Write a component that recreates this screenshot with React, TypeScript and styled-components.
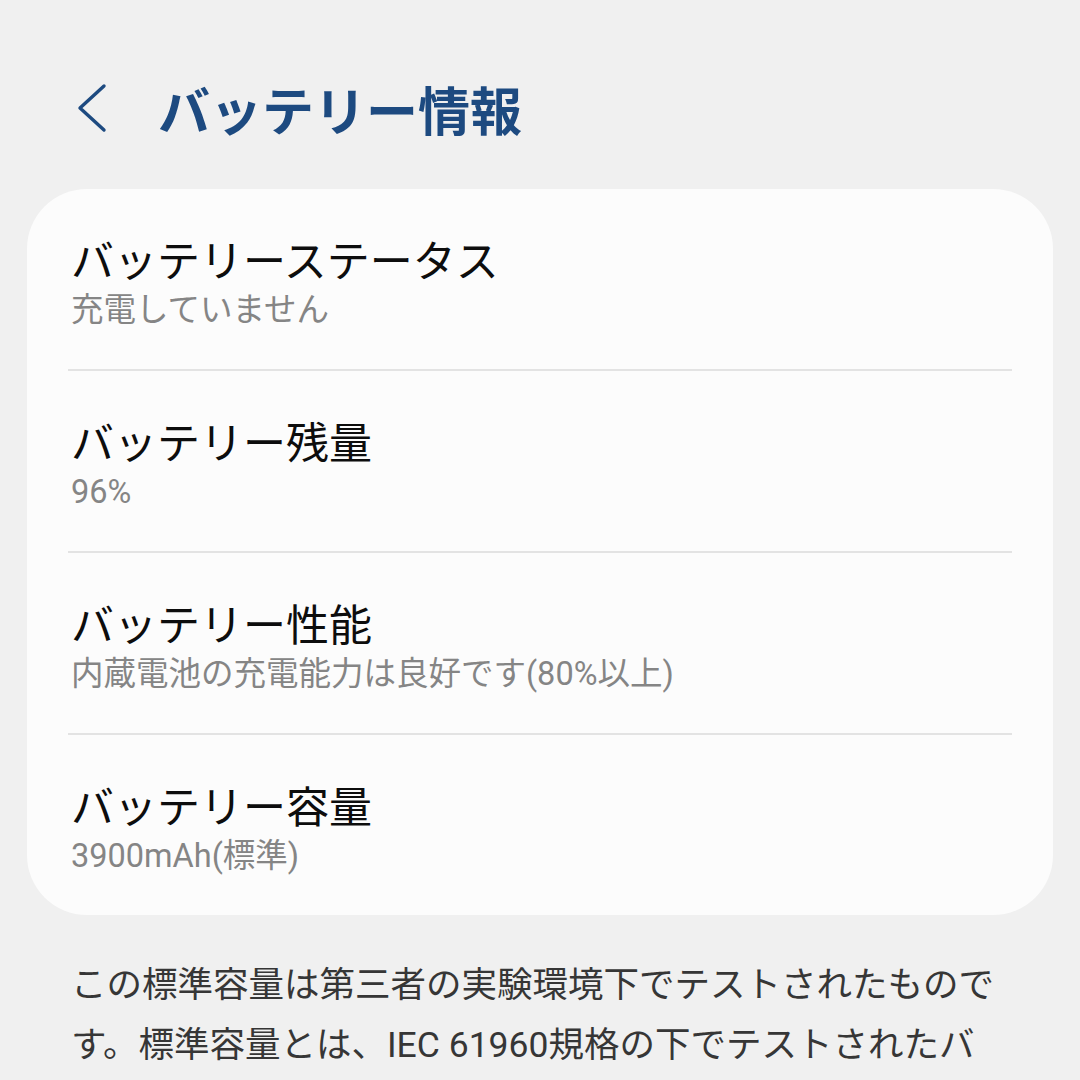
import styled, { createGlobalStyle } from "styled-components";

interface Item {
  title: string;
  value: string;
}

const items: Item[] = [
  { title: "バッテリーステータス", value: "充電していません" },
  { title: "バッテリー残量", value: "96%" },
  { title: "バッテリー性能", value: "内蔵電池の充電能力は良好です(80%以上)" },
  { title: "バッテリー容量", value: "3900mAh(標準)" },
];

export default function App() {
  return (
    <>
      <GlobalStyle />
      <Page>
        <Header>
          <BackButton aria-label="戻る">
            <svg width="32" height="50" viewBox="0 0 32 50">
              <polyline
                points="28,3 4,25 28,47"
                fill="none"
                stroke="#1d4a80"
                strokeWidth="3.4"
                strokeLinecap="round"
                strokeLinejoin="round"
              />
            </svg>
          </BackButton>
          <Title>バッテリー情報</Title>
        </Header>
        <Card>
          {items.map((item, i) => (
            <Row key={item.title} $last={i === items.length - 1}>
              <RowTitle>{item.title}</RowTitle>
              <RowValue>{item.value}</RowValue>
            </Row>
          ))}
        </Card>
        <Note>
          この標準容量は第三者の実験環境下でテストされたもので
          <br />
          す。標準容量とは、IEC 61960規格の下でテストされたバ
        </Note>
      </Page>
    </>
  );
}

const GlobalStyle = createGlobalStyle`
  html, body {
    margin: 0;
    padding: 0;
    background: #f0f0f0;
  }
  body {
    font-family: Roboto, "Noto Sans CJK JP", sans-serif;
  }
`;

const Page = styled.div`
  width: 1080px;
  height: 1080px;
  overflow: hidden;
  padding: 48px 27px 0;
  box-sizing: border-box;
`;

const Header = styled.header`
  height: 120px;
  display: flex;
  align-items: center;
  padding-left: 49px;
  gap: 50px;
  margin-bottom: 21px;
`;

const BackButton = styled.button`
  border: none;
  background: none;
  padding: 0;
  display: flex;
  cursor: pointer;
`;

const Title = styled.h1`
  margin: 0;
  font-size: 52px;
  font-weight: 700;
  color: #1d4a80;
  font-family: "Noto Sans CJK JP", sans-serif;
`;

const Card = styled.section`
  background: #fcfcfc;
  border-radius: 60px;
  display: flex;
  flex-direction: column;
`;

const Row = styled.div<{ $last: boolean }>`
  position: relative;
  padding: 41px 44px 37px;
  display: flex;
  flex-direction: column;
  border-bottom: ${(p) => (p.$last ? "none" : "2px solid transparent")};
  &::after {
    content: "";
    display: ${(p) => (p.$last ? "none" : "block")};
    position: absolute;
    left: 41px;
    right: 41px;
    bottom: -2px;
    height: 2px;
    background: #e3e3e3;
  }
`;

const RowTitle = styled.div`
  font-size: 43px;
  line-height: 56px;
  color: #0d0d0d;
  font-family: "Noto Sans CJK JP", sans-serif;
`;

const RowValue = styled.div`
  margin-top: 2px;
  font-size: 32.5px;
  line-height: 44px;
  color: #858585;
`;

const Note = styled.p`
  margin: 0;
  padding: 40px 0 0 44px;
  font-size: 35.5px;
  line-height: 60px;
  color: #363636;
  white-space: nowrap;
`;
